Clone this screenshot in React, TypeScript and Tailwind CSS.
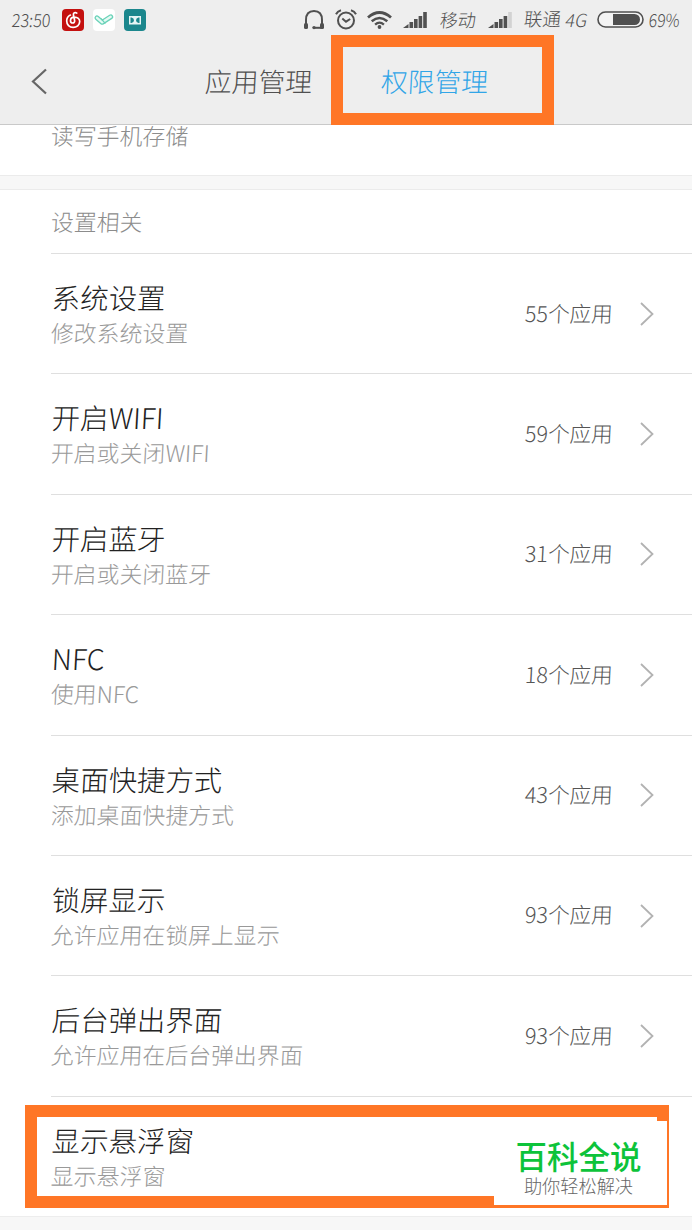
import React from "react";

interface Permission {
  title: string;
  desc: string;
  count: string;
}

const permissions: Permission[] = [
  { title: "系统设置", desc: "修改系统设置", count: "55" },
  { title: "开启WIFI", desc: "开启或关闭WIFI", count: "59" },
  { title: "开启蓝牙", desc: "开启或关闭蓝牙", count: "31" },
  { title: "NFC", desc: "使用NFC", count: "18" },
  { title: "桌面快捷方式", desc: "添加桌面快捷方式", count: "43" },
  { title: "锁屏显示", desc: "允许应用在锁屏上显示", count: "93" },
  { title: "后台弹出界面", desc: "允许应用在后台弹出界面", count: "93" },
];

const Signal = ({ weak = false }: { weak?: boolean }) => (
  <svg width="25" height="16" viewBox="0 0 25 16" fill="#505050">
    <path d="M0 16L5.5 12V16Z" />
    <rect x="6.5" y="10" width="3.6" height="6" />
    <rect x="11" y="7" width="3.6" height="9" />
    <rect x="15.6" y="4" width="3.6" height="12" />
    <rect x="20.2" y="0" width="3.6" height="16" fill={weak ? "#d2d2d2" : "#505050"} />
  </svg>
);

const StatusBar = () => (
  <div className="flex h-[39px] items-center text-[18px] leading-none text-[#505050]">
    <span className="mb-[2px] ml-3 w-[50px] origin-left scale-x-[0.9] -skew-x-6 whitespace-nowrap">
      23:50
    </span>
    <svg className="shrink-0" width="22" height="22" viewBox="0 0 22 22">
      <rect width="22" height="22" rx="4" fill="#c4100f" />
      <g fill="none" stroke="#fff" strokeWidth="1.7" strokeLinecap="round">
        <path d="M14.8 4.1C13.2 3 11.2 4 11.4 5.8L12.6 11.4C12.9 13.2 11.8 14 10.7 14C9.4 14 8.5 13 8.5 11.7C8.5 9.6 10.2 8.1 12.5 8.1C15.6 8.1 17.7 10.2 17.7 12.6C17.7 16 14.7 18.4 11.1 18.4C7.4 18.4 4.7 15.7 4.7 12.1C4.7 9.2 6.2 7.1 8.4 6.1" />
      </g>
    </svg>
    <svg className="ml-[9px] shrink-0" width="22" height="22" viewBox="0 0 22 22">
      <rect width="22" height="22" rx="4" fill="#fff" />
      <g fill="none" strokeLinecap="round" strokeLinejoin="round">
        <path d="M4 8.8L9.2 13.3L17.7 7.8" stroke="#69d2b8" strokeWidth="5" />
        <path d="M4 8.8L9.2 13.3L17.7 7.8" stroke="#e5faf4" strokeWidth="2.4" />
        <path d="M8.4 10L12 14.2" stroke="#69d2b8" strokeWidth="1.2" />
      </g>
    </svg>
    <svg className="ml-[9px] shrink-0" width="22" height="22" viewBox="0 0 22 22">
      <rect width="22" height="22" rx="4" fill="#1b878d" />
      <rect x="5" y="7" width="12" height="8.5" fill="#e5f5f5" />
      <path d="M6.5 8.5H7.5Q10 9 10 11.3T7.5 14H6.5ZM15.5 8.5H14.5Q12 9 12 11.3T14.5 14H15.5Z" fill="#1b878d" />
    </svg>

    <svg className="ml-[158px] shrink-0" width="20" height="20" viewBox="0 0 20 20">
      <path d="M2 16V10Q2 1 10 1T18 10V16" fill="none" stroke="#505050" strokeWidth="2" />
      <rect x="0" y="13" width="4" height="6" rx="1.5" fill="#505050" />
      <rect x="16" y="13" width="4" height="6" rx="1.5" fill="#505050" />
      <path d="M10.5 17.8H17" stroke="#505050" strokeWidth="2" />
      <circle cx="10" cy="17.6" r="1.7" fill="#505050" />
    </svg>
    <svg className="ml-[11px] shrink-0" width="22" height="21" viewBox="0 0 22 21" fill="none" stroke="#505050" strokeWidth="2">
      <circle cx="11" cy="11.5" r="8" />
      <path d="M7.3 9.5L11 12.7L15.2 10" />
      <path d="M1 5.3Q2.5 2.2 6 1.2M16 1.2Q19.5 2.2 21 5.3" />
    </svg>
    <svg className="ml-[10px] shrink-0" width="25" height="18" viewBox="0 0 25 18" fill="none" stroke="#505050">
      <path d="M1 6.5Q12.5 -3.5 24 6.5" strokeWidth="2.8" />
      <path d="M4.7 10.2Q12.5 3.7 20.3 10.2" strokeWidth="2.5" />
      <path d="M8.1 13.6Q12.5 9.6 16.9 13.6" strokeWidth="2.3" />
      <circle cx="12.5" cy="16" r="1.9" fill="#505050" stroke="none" />
    </svg>
    <div className="ml-[11px] shrink-0">
      <Signal />
    </div>
    <span className="mb-[2px] ml-[12px] w-[37px] shrink-0 -skew-x-6 whitespace-nowrap">移动</span>
    <div className="ml-[11px] shrink-0">
      <Signal weak />
    </div>
    <span className="mb-[2px] ml-[11px] w-[42px] shrink-0 -skew-x-6 whitespace-nowrap text-[18.5px]">联通</span>
    <span className="mb-[2px] w-[31px] shrink-0 origin-left -skew-x-12 whitespace-nowrap">
      4G
    </span>
    <svg className="shrink-0" width="47" height="17" viewBox="0 0 47 17">
      <rect x="1" y="1" width="45" height="15" rx="7.5" fill="#f4f4f4" stroke="#505050" strokeWidth="1.6" />
      <path d="M16 3H37.5A5.5 5.5 0 0 1 37.5 14H16Z" fill="#505050" />
    </svg>
    <span className="mb-[2px] ml-[5px] origin-left scale-x-[0.87] -skew-x-6">69%</span>
  </div>
);

const PermissionText = ({ title, desc }: { title: string; desc: string }) => (
  <div className="pt-[25px]">
    <div className="ml-px origin-left -skew-x-3 text-[28.4px] leading-9 text-[#222]">{title}</div>
    <div className="origin-left -skew-x-3 text-[22.9px] leading-[34px] text-[#999]">{desc}</div>
  </div>
);

const PermissionRow: React.FC<Permission> = ({ title, desc, count }) => (
  <div className="ml-[51px] flex h-[120.4px] justify-between border-b border-[#dfdfdf]">
    <PermissionText title={title} desc={desc} />
    <div className="mr-[38px] flex items-center">
      <span className="mb-[2px] -skew-x-3 text-[21.6px] text-[#555]">{count}个应用</span>
      <svg className="ml-[27px]" width="14" height="24" viewBox="0 0 14 24" fill="none">
        <path d="M1 1L12.5 12L1 23" stroke="#b2b2b2" strokeWidth="1.8" />
      </svg>
    </div>
  </div>
);

export default function App() {
  return (
    <main className="relative h-[1230px] w-[692px] overflow-hidden bg-white font-['Noto_Sans_CJK_SC',sans-serif] font-light">
      <header className="h-[125px] border-b border-[#c9c9c9] bg-[#eee]">
        <StatusBar />
        <div className="flex h-[85px] items-center text-[26.8px]">
          <svg className="ml-[31px]" width="16" height="27" viewBox="0 0 16 27" fill="none">
            <path d="M15 1.5L2 13.5L15 25.5" stroke="#666" strokeWidth="2.2" />
          </svg>
          <span className="ml-[158px] w-[176px] -skew-x-3 text-[#505050]">应用管理</span>
          <span className="-skew-x-3 text-[#31a5e7]">权限管理</span>
        </div>
      </header>

      <div className="h-[50px] overflow-hidden pl-[51px] text-[22.9px] leading-[20px] text-[#8c8c8c]">
        <span className="inline-block -skew-x-3">读写手机存储</span>
      </div>
      <div className="h-[15px] border-y border-[#ebebeb] bg-[#f7f7f7]" />
      <div className="ml-[51px] flex h-16 items-center border-b border-[#dfdfdf] text-[22.9px] text-[#8c8c8c]">
        <span className="-skew-x-3">设置相关</span>
      </div>

      {permissions.map((item) => (
        <PermissionRow key={item.title} {...item} />
      ))}
      <div className="ml-[51px] h-[119px]">
        <PermissionText title="显示悬浮窗" desc="显示悬浮窗" />
      </div>
      <div className="h-4 border-t border-[#ededed] bg-[#f7f7f7]" />

      {/* highlight frames and the corner badge lie over the list */}
      <div className="absolute left-[331px] top-[35px] h-[90px] w-[223px] border-12 border-[#ff7626]" />
      <div className="absolute left-[25px] top-[1105px] h-[103px] w-[644px] border-12 border-[#ff7626]" />
      <div className="absolute left-[494px] top-[1121px] flex h-[84px] w-[173px] flex-col items-center bg-white pr-1">
        <div className="mt-[18px] text-[31.5px] font-medium leading-8 text-[#0dc33a]">百科全说</div>
        <div className="mt-1 text-[18.2px] leading-5 text-[#666]">助你轻松解决</div>
      </div>
    </main>
  );
}
